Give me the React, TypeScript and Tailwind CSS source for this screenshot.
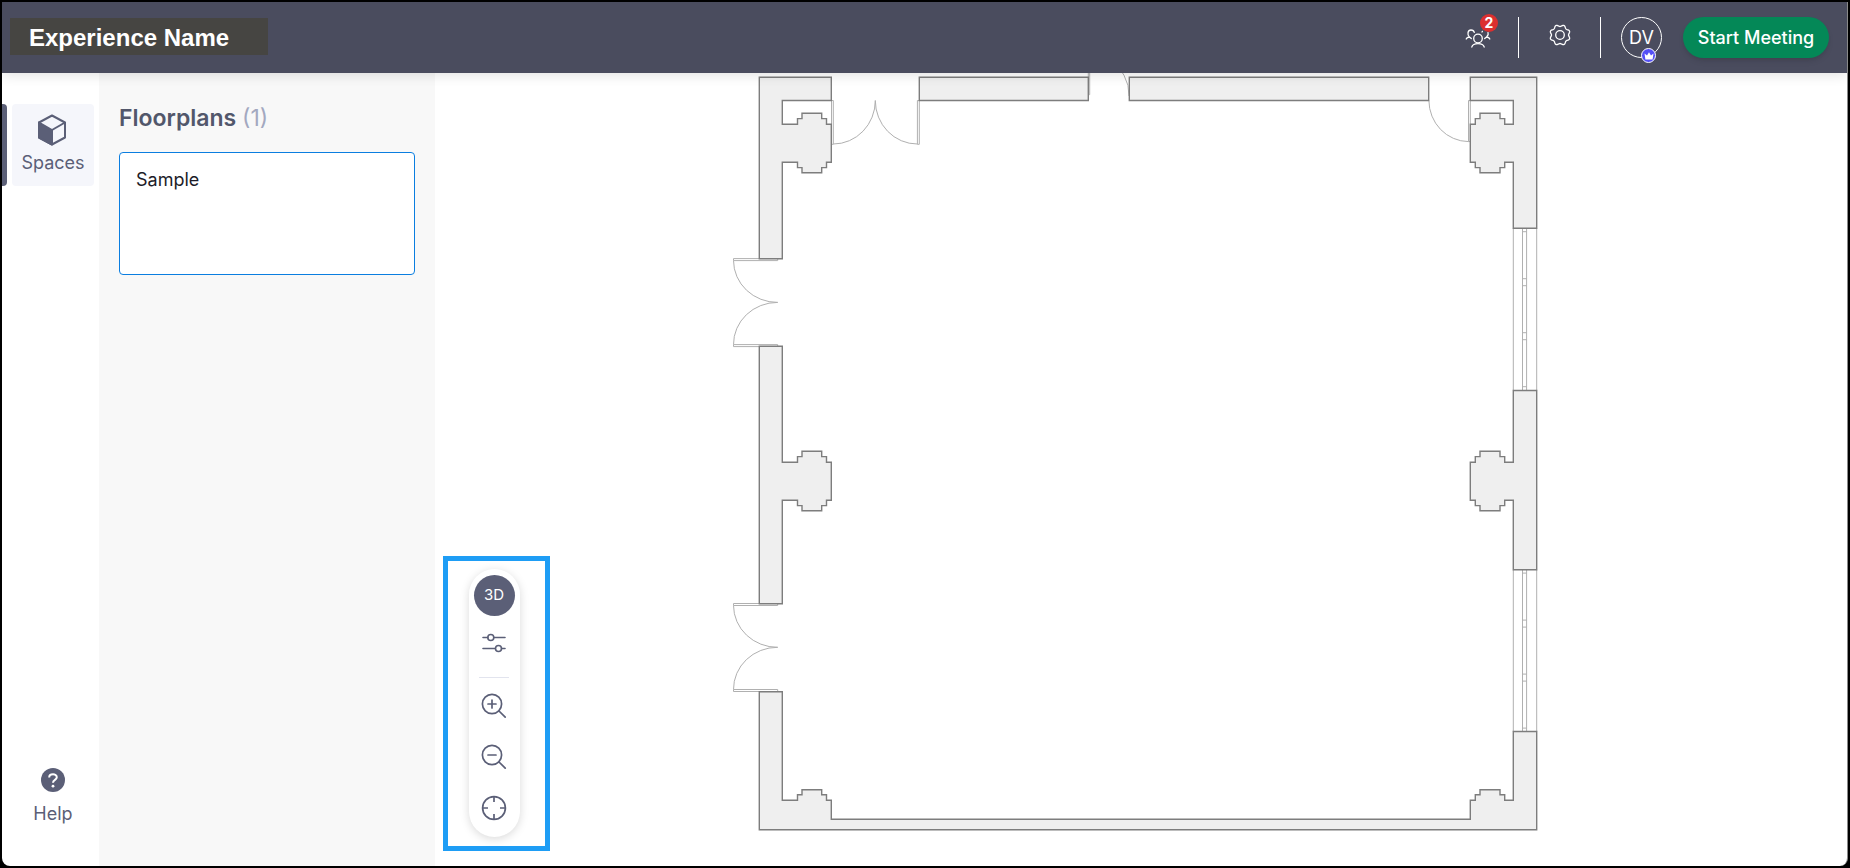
import { useState } from "react";

const rightColumn = (top: number) =>
  `V${top + 11} H1504.7 V${top + 5.3} H1500 V${top} H1480 V${top + 5.3} H1475.3 V${top + 11} H1470.3 V${top + 49} H1475.3 V${top + 54.3} H1480 V${top + 59.5} H1500 V${top + 54.3} H1504.7 V${top + 49} H1513.3`;

const leftColumn = (top: number) =>
  `V${top + 11} H797.5 V${top + 5.3} H802 V${top} H821.7 V${top + 5.3} H826.5 V${top + 11} H831.3 V${top + 49} H826.5 V${top + 54.3} H821.7 V${top + 59.5} H802 V${top + 54.3} H797.5 V${top + 49} H782.3`;

const walls = [
  `M759.3 77.3 H831.3 V100.5 H782.3 ${leftColumn(113.3)} V258.7 H759.3 Z`,
  `M759.3 346.3 H782.3 ${leftColumn(451.3)} V603.7 H759.3 Z`,
  "M919.3 77.3 H1088.3 V100.5 H919.3 Z",
  "M1129.3 77.3 H1428.7 V100.5 H1129.3 Z",
  `M1536.7 77.3 H1470.3 V100.5 H1513.3 ${rightColumn(113.3)} V228.3 H1536.7 Z`,
  `M1536.7 390.5 H1513.3 ${rightColumn(451.3)} V569.7 H1536.7 Z`,
  "M759.3 691.7 H782.3 V800.3 H797.5 V794.7 H802 V789.7 H821.7 V794.7 H826.5 V800.3 H831.3 V819.3 H1470.3 V800.3 H1475.3 V794.7 H1480 V789.7 H1500 V794.7 H1504.7 V800.3 H1513.3 V731.5 H1536.7 V829.7 H759.3 Z",
];

const sideDoor = (y: number) =>
  `M733.5 ${y} H777.7 V${y + 2} H733.5 Z M733.5 ${y + 2} A44 42 0 0 0 777.7 ${y + 43.8} A44 42 0 0 0 733.5 ${y + 86} M733.5 ${y + 86} H777.7 V${y + 88} H733.5 Z`;

const windowPath = (y: number) =>
  `M1513.3 ${y} V${y + 162} M1536.7 ${y} V${y + 162} M1522.5 ${y} V${y + 162} M1526.6 ${y} V${y + 162} ` +
  [3.4, 50.4, 57.4, 104.4, 111.4, 158.4].map((n) => `M1522.5 ${y + n} H1526.6`).join(" ");

const openings = [
  sideDoor(258.6),
  sideDoor(603.5),
  "M831.5 100.5 H833.3 V144.3 H831.5 Z M833.3 144 A42 43.5 0 0 0 875.3 100.5 A42 43.5 0 0 0 917.4 144 M917.4 100.5 H919.3 V144.3 H917.4 Z",
  "M1088.3 70 H1089.7 V94.7 H1088.3 Z M1109 60 A40 40 0 0 1 1129 96",
  "M1428.9 100.5 A40 41.3 0 0 0 1468.5 141.6 H1470.3 V100.5 H1468.5 V141.6",
  windowPath(228.3),
  windowPath(569.7),
];

const FloorplanDrawing = () => (
  <svg viewBox="435 73 1412 793" className="w-full h-full" role="img" aria-label="Floorplan">
    <g fill="none" stroke="#b0b0b0" strokeWidth="1">
      {openings.map((d) => (
        <path key={d} d={d} />
      ))}
    </g>
    <g fill="#efefef" stroke="#7d7d7d" strokeWidth="1.4">
      {walls.map((d) => (
        <path key={d} d={d} />
      ))}
    </g>
  </svg>
);

// eight soft teeth round the centre
const gearPath =
  Array.from({ length: 96 }, (_, i) => {
    const a = (i / 96) * Math.PI * 2;
    const r = 9.4 - 0.9 * Math.cos(8 * a);
    return `${i ? "L" : "M"}${(11 + r * Math.cos(a)).toFixed(2)} ${(11 + r * Math.sin(a)).toFixed(2)}`;
  }).join(" ") + " Z";

const CubeIcon = () => (
  <svg className="mr-0.5" width="28" height="32" viewBox="0 0 28 32" fill="none" stroke="#5b5f77" strokeWidth="2" strokeLinejoin="round">
    <path d="M14 1.5 L27 8.5 V23.5 L14 30.5 L1 23.5 V8.5 Z" />
    <path d="M1 8.5 L14 16 V30.5 L1 23.5 Z" fill="#5b5f77" />
    <path d="M14 16 L27 8.5" />
  </svg>
);

const HelpIcon = () => (
  <svg width="24" height="24" viewBox="0 0 24 24">
    <circle cx="12" cy="12" r="12" fill="#5b5f77" />
    <path d="M8.2 9.4 C8.2 5.2 15.8 5.2 15.8 9.3 C15.8 12 12 11.8 12 14.8" fill="none" stroke="#fff" strokeWidth="2" />
    <circle cx="12" cy="18.2" r="1.4" fill="#fff" />
  </svg>
);

const PeopleIcon = () => (
  <svg width="26" height="20" viewBox="0 0 26 20" fill="none" stroke="#fff" strokeWidth="1.3" strokeLinecap="round">
    <circle cx="13" cy="10.5" r="4.3" />
    <path d="M6.8 19 C8 14.6 18 14.6 19.2 19" />
    <path d="M1.2 11 C1.8 9.6 3 9.2 4.4 9 C2 6.6 2.6 2 6 2 C8 2 9 3 9.3 4.4 M4.4 9 L6.3 10.6" />
    <path d="M24.8 11 C24.2 9.6 23 9.2 21.6 9 C23 7.6 23.6 6 23 4.6 M21.6 9 L19.7 10.6 M17 4 L17.4 3.4" />
  </svg>
);

const GearIcon = () => (
  <svg width="22" height="22" viewBox="0 0 22 22" fill="none" stroke="#fff" strokeWidth="1.3" strokeLinejoin="round">
    <path d={gearPath} />
    <circle cx="11" cy="11" r="4.3" />
  </svg>
);

const CrownIcon = () => (
  <svg width="10" height="8" viewBox="0 0 10 8" fill="#fff">
    <path d="M0.5 1.5 L3 3.5 L5 0.3 L7 3.5 L9.5 1.5 L8.6 7.5 H1.4 Z" />
  </svg>
);

const SlidersIcon = () => (
  <svg width="24" height="20" viewBox="0 0 24 20" fill="none" stroke="#5b5f77" strokeWidth="1.6" strokeLinecap="round">
    <path d="M1 4.5 H5.8 M12 4.5 H23 M1 15.5 H13 M19.6 15.5 H23" />
    <circle cx="8.8" cy="4.5" r="3" />
    <circle cx="16.5" cy="15.5" r="3" />
  </svg>
);

const ZoomIcon = ({ plus }: { plus?: boolean }) => (
  <svg width="26" height="26" viewBox="0 0 26 26" fill="none" stroke="#5b5f77" strokeWidth="1.7" strokeLinecap="round">
    <circle cx="11" cy="11" r="9.6" />
    <path d="M18 18 L24.2 24.2 M7 11 H15" />
    {plus && <path d="M11 7 V15" />}
  </svg>
);

const RecenterIcon = () => (
  <svg width="26" height="26" viewBox="0 0 26 26" fill="none" stroke="#5b5f77" strokeWidth="1.7">
    <circle cx="13" cy="13" r="11.4" />
    <path d="M13 1.6 V7 M13 19 V24.4 M1.6 13 H7 M19 13 H24.4" />
  </svg>
);

const toolButton = "w-10 h-10 flex items-center justify-center cursor-pointer";

const App = () => {
  const [is3D, setIs3D] = useState(false);

  return (
    <div className="h-screen bg-black p-0.5 font-['Inter',sans-serif]">
      <div className="h-full flex flex-col bg-white border-r border-[#8a8a8a] rounded-b-lg overflow-hidden">
        <header className="relative z-10 h-[71px] shrink-0 flex items-center justify-between bg-[#4a4c5e] pr-[18px] pl-2 shadow-[0_2px_12px_rgba(0,0,0,0.12)]">
          <h1 className="w-[258px] h-[37px] mb-0.5 pt-0.5 pl-[19px] flex items-center bg-[#464542] text-white text-2xl font-bold font-['Liberation_Sans',sans-serif]">
            Experience Name
          </h1>
          <div className="flex items-center">
            <button className="relative mr-[27px]" aria-label="Participants">
              <PeopleIcon />
              <span className="absolute -top-3.5 left-[15px] w-[18px] h-[18px] rounded-full bg-[#dc2f2f] text-white text-sm font-bold flex items-center justify-center">
                2
              </span>
            </button>
            <div className="w-px h-[41px] bg-white" />
            <button className="ml-[30px] mr-[29px] mb-1.5" aria-label="Settings">
              <GearIcon />
            </button>
            <div className="w-px h-[41px] bg-white" />
            <button className="relative ml-5 w-[41px] h-[41px] rounded-full border border-white text-white text-lg flex items-center justify-center">
              DV
              <span className="absolute top-[30px] left-[19px] w-[15px] h-[15px] rounded-full border border-white bg-[#5450f5] flex items-center justify-center">
                <CrownIcon />
              </span>
            </button>
            <button className="ml-[21px] w-[146px] h-[41px] rounded-full bg-[#048857] text-white text-lg font-medium shadow-md">
              Start Meeting
            </button>
          </div>
        </header>
        <div className="grow min-h-0 flex">
          <nav className="w-[97px] shrink-0 flex flex-col justify-between pt-[31px] pb-[38px] text-lg text-[#5b5f77]">
            <div className="flex">
              <div className="w-[5px] rounded-r bg-[#5b5f77]" />
              <button className="ml-[5px] w-[82px] h-[82px] rounded bg-[#f5f6fb] flex flex-col items-center pt-2.5">
                <CubeIcon />
                <span className="mt-[3px]">Spaces</span>
              </button>
            </div>
            <button className="ml-[5px] flex flex-col items-center">
              <HelpIcon />
              <span className="mt-2">Help</span>
            </button>
          </nav>
          <aside className="w-[336px] shrink-0 bg-[#f8f8f8] px-5 pt-[29px]">
            <h2 className="text-[23px] leading-8 font-semibold text-[#52576b]">
              Floorplans <span className="font-normal text-[#a3a8c0]">(1)</span>
            </h2>
            <button className="mt-[18px] w-full h-[123px] rounded border border-[#0b7ee0] bg-white px-4 pt-[13px] flex items-start text-lg text-[#1c1c28]">
              Sample
            </button>
          </aside>
          <main className="relative grow min-w-0">
            <FloorplanDrawing />
            <div className="absolute left-2 bottom-[15px] w-[107px] border-[5px] border-[#1e9df5] pt-2 pb-[9px] pl-[21px]">
              <div className="w-[51px] rounded-full bg-white shadow-[0_2px_10px_rgba(0,0,0,0.15)] flex flex-col items-center pt-1.5 pb-[9px] pr-px">
                <button
                  onClick={() => setIs3D(!is3D)}
                  className="w-[41px] h-[41px] rounded-full bg-[#5b5f77] text-white text-[15px] cursor-pointer"
                >
                  3D
                </button>
                <button className={toolButton + " mt-[7px]"} aria-label="Display options">
                  <SlidersIcon />
                </button>
                <div className="mt-3.5 mb-2 w-[30px] h-px shrink-0 bg-[#e2e4ee]" />
                <button className={toolButton} aria-label="Zoom in">
                  <ZoomIcon plus />
                </button>
                <button className={toolButton + " mt-[11px]"} aria-label="Zoom out">
                  <ZoomIcon />
                </button>
                <button className={toolButton + " mt-[11px]"} aria-label="Recenter">
                  <RecenterIcon />
                </button>
              </div>
            </div>
          </main>
        </div>
      </div>
    </div>
  );
};

export default App;
